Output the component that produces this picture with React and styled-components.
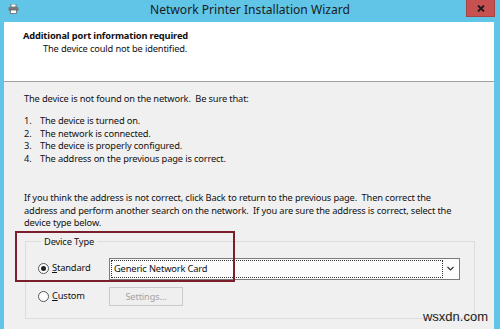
import styled, { createGlobalStyle } from "styled-components";

const Global = createGlobalStyle`
  body {
    margin: 0;
    background: #ffffff;
  }
`;

const Window = styled.div`
  position: relative;
  width: 500px;
  height: 329px;
  overflow: hidden;
  background: #60c5e7;
  display: flex;
  flex-direction: column;
  font-family: "Noto Sans", "Open Sans", sans-serif;
  font-size: 9.3px;
  letter-spacing: -0.15px;
  color: #111;
`;

const TitleBar = styled.div`
  height: 22px;
  flex-shrink: 0;
  display: grid;
  grid-template-columns: 1fr auto 1fr;
  align-items: start;
`;

const AppIcon = styled.div`
  padding: 4px 0 0 8px;
  display: flex;
`;

const Title = styled.div`
  font-size: 12.1px;
  letter-spacing: 0;
  line-height: 19px;
  color: #1b1b1b;
  white-space: nowrap;
`;

const CloseButton = styled.div`
  justify-self: end;
  margin-right: 5px;
  width: 27px;
  height: 16px;
  background: #c75150;
  border: 1px solid #a54442;
  border-top: none;
  display: flex;
  align-items: center;
  justify-content: center;
`;

const Client = styled.div`
  flex: 1;
  margin: 0 6px 0 4px;
  display: flex;
  flex-direction: column;
  background: #f0f0f0;
`;

const Header = styled.div`
  height: 60px;
  flex-shrink: 0;
  background: #ffffff;
  border-bottom: 1px solid #a0a0a0;
  padding: 7px 0 0 19px;
  box-sizing: border-box;
  line-height: 13px;
`;

const HeaderTitle = styled.div`
  font-weight: 700;
`;

const HeaderSub = styled.div`
  padding-left: 20px;
`;

const Content = styled.div`
  padding: 11px 19px 0 20px;
  line-height: 12.5px;
`;

const Para = styled.p`
  margin: 0;
  white-space: pre;
`;

const Steps = styled.ol`
  margin: 9.5px 0 27px;
  padding: 0;
  list-style: none;
`;

const Step = styled.li`
  display: flex;
`;

const StepNum = styled.span`
  width: 16px;
`;

const Group = styled.fieldset`
  margin: 6px 0 0 1px;
  padding: 10px 13px 12px 12px;
  border: 1px solid #dcdcdc;
  display: grid;
  grid-template-columns: 71px 351px;
  row-gap: 7px;
  align-items: center;
`;

const Legend = styled.legend`
  padding: 0 3px;
  margin-left: 3px;
  line-height: 12px;
`;

const RadioLabel = styled.label`
  display: flex;
  align-items: center;
  gap: 3px;
`;

const Radio = styled.span`
  width: 9px;
  height: 9px;
  border-radius: 50%;
  border: 1px solid #555;
  background: #fff;
  display: flex;
  align-items: center;
  justify-content: center;

  &::after {
    content: "";
    width: 5px;
    height: 5px;
    border-radius: 50%;
    background: ${(p) => (p.$checked ? "#222" : "transparent")};
  }
`;

const Key = styled.span`
  text-decoration: underline;
`;

const Combo = styled.div`
  height: 22px;
  box-sizing: border-box;
  border: 1px solid #7a7a7a;
  background: #fcfcfc;
  display: flex;
  align-items: center;
  padding: 1px;
`;

const ComboValue = styled.div`
  flex: 1;
  height: 100%;
  box-sizing: border-box;
  border: 1px dotted #333;
  padding-left: 2px;
  line-height: 16px;
`;

const ComboArrow = styled.div`
  width: 15px;
  display: flex;
  justify-content: center;
`;

const Button = styled.div`
  width: 74px;
  height: 19px;
  box-sizing: border-box;
  border: 1px solid #cacaca;
  background: #efefef;
  color: #a3a3a3;
  text-align: center;
  line-height: 17px;
`;

const Annotation = styled.div`
  position: absolute;
  left: 15px;
  top: 231px;
  width: 220px;
  height: 51px;
  box-sizing: border-box;
  border: 2px solid #7b1f2c;
`;

const Watermark = styled.div`
  position: absolute;
  right: 12px;
  top: 309px;
  font-family: "Liberation Sans", Arial, sans-serif;
  font-size: 13px;
  letter-spacing: 0;
  color: #1a1a1a;
`;

const PrinterIcon = () => (
  <svg width="11" height="10" viewBox="0 0 11 10">
    <rect x="3" y="0" width="5" height="3" fill="#fff" stroke="#666" strokeWidth="0.8" />
    <rect x="0.5" y="3" width="10" height="4" rx="1" fill="#777" />
    <rect x="2.5" y="6" width="6" height="3.5" fill="#fff" stroke="#666" strokeWidth="0.8" />
  </svg>
);

export default function App() {
  return (
    <>
      <Global />
      <Window>
        <TitleBar>
          <AppIcon>
            <PrinterIcon />
          </AppIcon>
          <Title>Network Printer Installation Wizard</Title>
          <CloseButton>
            <svg width="8" height="7" viewBox="0 0 8 7">
              <path d="M1 0.5 L7 6.5 M7 0.5 L1 6.5" stroke="#1a1a1a" strokeWidth="1.8" />
            </svg>
          </CloseButton>
        </TitleBar>
        <Client>
          <Header>
            <HeaderTitle>Additional port information required</HeaderTitle>
            <HeaderSub>The device could not be identified.</HeaderSub>
          </Header>
          <Content>
            <Para>The device is not found on the network.  Be sure that:</Para>
            <Steps>
              {[
                "The device is turned on.",
                "The network is connected.",
                "The device is properly configured.",
                "The address on the previous page is correct.",
              ].map((s, i) => (
                <Step key={i}>
                  <StepNum>{i + 1}.</StepNum>
                  {s}
                </Step>
              ))}
            </Steps>
            <Para>
              {"If you think the address is not correct, click Back to return to the previous page.  Then correct the\naddress and perform another search on the network.  If you are sure the address is correct, select the\ndevice type below."}
            </Para>
            <Group>
              <Legend>Device Type</Legend>
              <RadioLabel>
                <Radio $checked />
                <span>
                  <Key>S</Key>tandard
                </span>
              </RadioLabel>
              <Combo>
                <ComboValue>Generic Network Card</ComboValue>
                <ComboArrow>
                  <svg width="7" height="5" viewBox="0 0 7 5">
                    <path d="M0.5 1 L3.5 4 L6.5 1" fill="none" stroke="#333" strokeWidth="1.2" />
                  </svg>
                </ComboArrow>
              </Combo>
              <RadioLabel>
                <Radio />
                <span>
                  <Key>C</Key>ustom
                </span>
              </RadioLabel>
              <Button>Settings...</Button>
            </Group>
          </Content>
        </Client>
        <Annotation />
        <Watermark>wsxdn.com</Watermark>
      </Window>
    </>
  );
}
